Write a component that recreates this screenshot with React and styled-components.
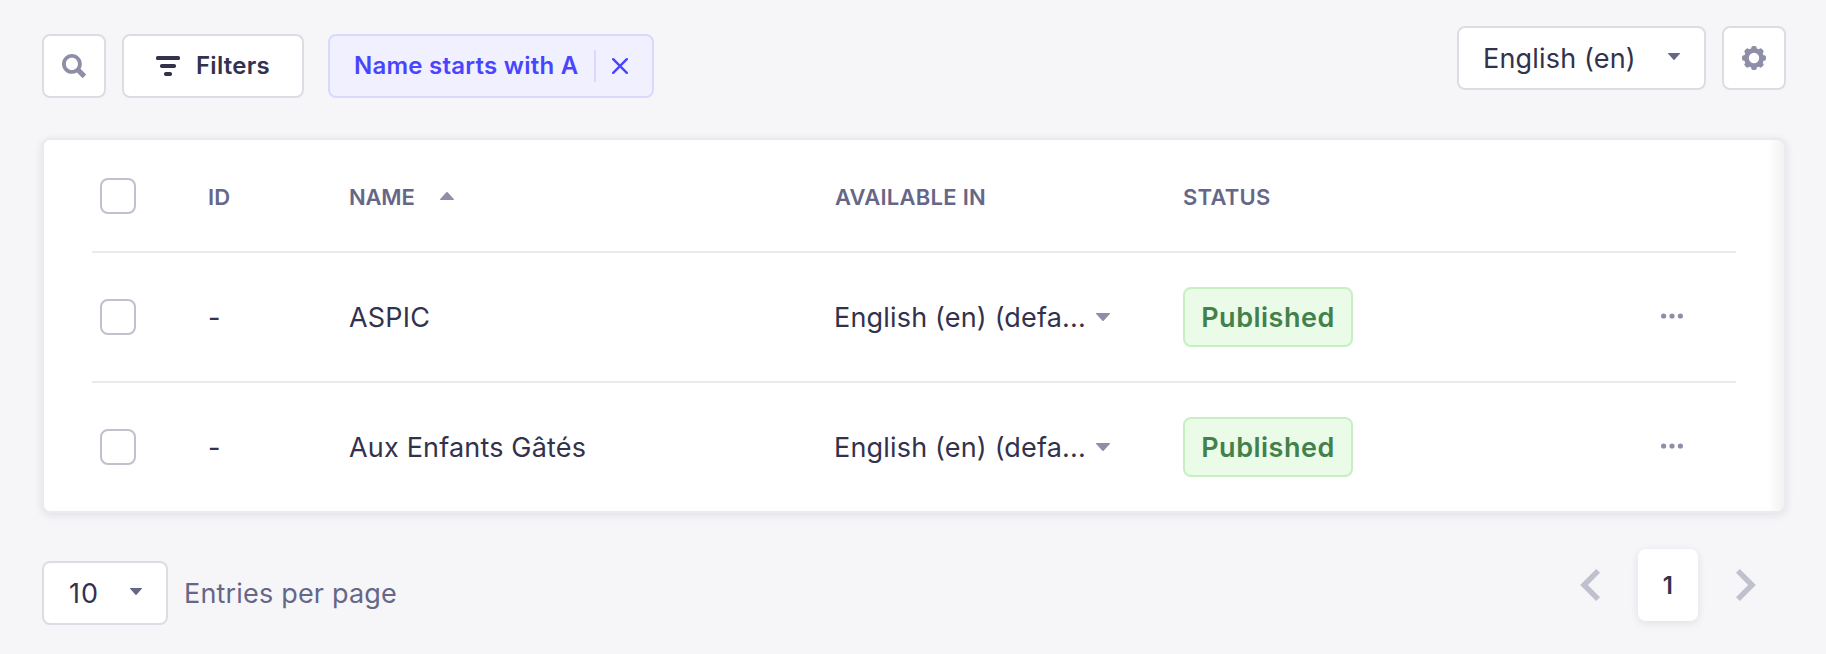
import React from "react";
import styled, { createGlobalStyle } from "styled-components";

const color = {
  page: "#f6f6f9",
  white: "#ffffff",
  line: "#eaeaef",
  border: "#dcdce4",
  disabled: "#c0c0cf",
  icon: "#8e8ea9",
  muted: "#666687",
  text: "#32324d",
  primary: "#4945ff",
  primarySoft: "#f0f0ff",
  primaryBorder: "#d9d8ff",
  success: "#43804b",
  successSoft: "#eafbe7",
  successBorder: "#c6f0c2",
};

const GlobalStyle = createGlobalStyle`
  * { box-sizing: border-box; }
  body {
    margin: 0;
    background: ${color.page};
    color: ${color.text};
    font-family: Inter, "Liberation Sans", sans-serif;
    font-size: 27px;
    letter-spacing: 0.18px;
    overflow: hidden;
  }
  button { font: inherit; letter-spacing: inherit; color: inherit; margin: 0; }
  svg { display: block; flex: none; }
`;

const Page = styled.main`
  width: 1826px;
  height: 654px;
  padding: 26px 40px 0 42px;
  background: ${color.page};
`;

const Toolbar = styled.header`
  display: flex;
  justify-content: space-between;
  align-items: flex-start;
  height: 72px;
`;

const FilterGroup = styled.div`
  display: flex;
  gap: 16px;
  padding-top: 8px;
`;

const LocaleGroup = styled.div`
  display: flex;
  gap: 16px;
`;

const Control = styled.button`
  display: flex;
  align-items: center;
  height: 64px;
  padding: 0 24px;
  border: 2px solid ${color.border};
  border-radius: 8px;
  background: ${color.white};
`;

const IconButton = styled(Control)`
  justify-content: center;
  width: 64px;
  padding: 0;
`;

const FilterButton = styled(Control)`
  gap: 16px;
  width: 182px;
  padding: 0 0 0 32px;
  font-size: 24px;
  font-weight: 600;
  letter-spacing: 0.26px;
`;

const ButtonLabel = styled.span`
  padding-bottom: 2px;
`;

const FilterTag = styled(Control)`
  width: 326px;
  margin-left: 8px;
  padding: 0 0 0 24px;
  border-color: ${color.primaryBorder};
  background: ${color.primarySoft};
  color: ${color.primary};
  font-size: 24px;
  font-weight: 600;
  letter-spacing: 0.24px;
`;

const TagLabel = styled(ButtonLabel)`
  width: 240px;
  text-align: left;
  white-space: nowrap;
`;

const TagDivider = styled.span`
  width: 2px;
  height: 32px;
  margin-right: 16px;
  background: ${color.primaryBorder};
`;

const Select = styled(Control)`
  justify-content: space-between;
  width: ${(p) => p.$width}px;
  letter-spacing: ${(p) => p.$tracking}px;
  svg { margin-top: -4px; }
`;

const TableCard = styled.section`
  margin-top: 40px;
  width: 1744px;
  height: 375px;
  padding: 0 48px;
  border: 2px solid ${color.line};
  border-radius: 8px;
  background: linear-gradient(270deg, rgba(33, 33, 52, 0.06), rgba(33, 33, 52, 0) 16px), ${color.white};
  box-shadow: 0 2px 8px rgba(33, 33, 52, 0.1);
`;

const Row = styled.div`
  display: grid;
  grid-template-columns: 116px 141px 485px 349px 170px 1fr;
  align-items: center;
  height: 130px;
  border-top: 2px solid ${color.line};
`;

const HeadRow = styled(Row)`
  height: 111px;
  border-top: 0;
  color: ${color.muted};
  font-size: 22px;
  font-weight: 600;
  letter-spacing: 0.26px;
`;

const HeadCell = styled.div`
  display: flex;
  align-items: center;
  gap: 25px;
  padding: 3px 0 0 ${(p) => p.$inset || 0}px;
  svg { margin-top: -3px; }
`;

const NameHeading = styled.span`
  letter-spacing: -0.2px;
`;

const Checkbox = styled.div`
  width: 36px;
  height: 36px;
  margin-left: 8px;
  border: 2px solid ${color.disabled};
  border-radius: 8px;
  background: ${color.white};
`;

const LocaleCell = styled.div`
  display: flex;
  align-items: center;
  white-space: nowrap;
`;

const LocaleLabel = styled.span`
  width: 262px;
`;

const Badge = styled.span`
  display: flex;
  align-items: center;
  justify-content: center;
  height: 60px;
  border: 2px solid ${color.successBorder};
  border-radius: 8px;
  background: ${color.successSoft};
  color: ${color.success};
  font-weight: 600;
  letter-spacing: 0.5px;
`;

const Actions = styled.div`
  display: flex;
  justify-content: flex-end;
  padding: 0 53px 2px 0;
`;

const Footer = styled.footer`
  display: flex;
  justify-content: space-between;
  align-items: flex-start;
  padding-top: 36px;
`;

const PageSize = styled.div`
  display: flex;
  align-items: center;
  gap: 16px;
  padding-top: 12px;
  color: ${color.muted};
`;

const SizeSelect = styled(Select)`
  padding-left: 25px;
  color: ${color.text};
`;

const Pagination = styled.nav`
  display: flex;
  align-items: center;
  gap: 38px;
  padding-right: 30px;
`;

const CurrentPage = styled.span`
  display: flex;
  align-items: center;
  justify-content: center;
  width: 60px;
  height: 72px;
  border-radius: 8px;
  background: ${color.white};
  box-shadow: 0 2px 8px rgba(33, 33, 52, 0.1);
  font-size: 24px;
  font-weight: 600;
`;

const SearchIcon = () => (
  <svg width="24" height="24" viewBox="0 0 24 24" fill={color.icon}>
    <path
      fillRule="evenodd"
      d="M23.813 20.163l-5.3-5.367a9.792 9.792 0 001.312-4.867C19.825 4.455 15.375 0 9.913 0 4.45 0 0 4.455 0 9.929c0 5.473 4.45 9.928 9.912 9.928a9.757 9.757 0 005.007-1.4l5.275 5.35a.634.634 0 00.913 0l2.706-2.741a.641.641 0 000-.903zM9.91 3.867c3.338 0 6.05 2.718 6.05 6.061s-2.712 6.061-6.05 6.061c-3.337 0-6.05-2.718-6.05-6.06 0-3.344 2.713-6.062 6.05-6.062z"
    />
  </svg>
);

const FilterIcon = () => (
  <svg width="24" height="20" viewBox="0 0 24 20" fill={color.text}>
    <rect width="24" height="4" rx="1.6" />
    <rect x="4" y="8" width="16" height="4" rx="1.8" />
    <rect x="8" y="16" width="8" height="4" rx="1.8" />
  </svg>
);

const CloseIcon = () => (
  <svg width="16" height="16" viewBox="0 0 16 16" fill="none" stroke={color.primary} strokeWidth="2.4" strokeLinecap="round">
    <path d="M1.2 1.2l13.6 13.6M14.8 1.2L1.2 14.8" />
  </svg>
);

const GearIcon = () => (
  <svg width="24" height="24" viewBox="-12 -12 24 24" fill={color.icon}>
    <circle r="7.6" fill="none" stroke={color.icon} strokeWidth="4.8" />
    {[0, 45, 90, 135, 180, 225, 270, 315].map((angle) => (
      <rect key={angle} x="-2.7" y="-12" width="5.4" height="5" rx="1.8" transform={`rotate(${angle})`} />
    ))}
  </svg>
);

const Caret = ({ width = 14, height = 8, fill = color.icon, up = false }) => (
  <svg width={width} height={height} viewBox="0 0 14 8" preserveAspectRatio="none" fill={fill}>
    <path
      transform={up ? "matrix(1 0 0 -1 0 8)" : undefined}
      d="M.5 0h13c.5 0 .7.6.3.9L7.6 7.7a.8.8 0 01-1.2 0L.2.9C-.2.6 0 0 .5 0z"
    />
  </svg>
);

const DotsIcon = () => (
  <svg width="22" height="6" viewBox="0 0 22 6" fill={color.icon}>
    <circle cx="2.6" cy="3" r="2.6" />
    <circle cx="11" cy="3" r="2.6" />
    <circle cx="19.4" cy="3" r="2.6" />
  </svg>
);

const Chevron = ({ right = false }) => (
  <svg width="20" height="32" viewBox="0 0 20 32" fill="none" stroke={color.disabled} strokeWidth="5.4">
    <path d={right ? "M1.9 1.9L16 16 1.9 30.1" : "M18.1 1.9L4 16l14.1 14.1"} />
  </svg>
);

const entries = ["ASPIC", "Aux Enfants Gâtés"];

export default function App() {
  return (
    <>
      <GlobalStyle />
      <Page>
        <Toolbar>
          <FilterGroup>
            <IconButton aria-label="Search"><SearchIcon /></IconButton>
            <FilterButton><FilterIcon /><ButtonLabel>Filters</ButtonLabel></FilterButton>
            <FilterTag>
              <TagLabel>Name starts with A</TagLabel>
              <TagDivider />
              <CloseIcon />
            </FilterTag>
          </FilterGroup>
          <LocaleGroup>
            <Select $width={249} $tracking={0.18}>
              English (en)
              <Caret width={12} height={7} fill={color.muted} />
            </Select>
            <IconButton aria-label="Settings"><GearIcon /></IconButton>
          </LocaleGroup>
        </Toolbar>

        <TableCard>
          <HeadRow>
            <Checkbox />
            <HeadCell>ID</HeadCell>
            <HeadCell><NameHeading>NAME</NameHeading><Caret up /></HeadCell>
            <HeadCell $inset={1}>AVAILABLE IN</HeadCell>
            <HeadCell>STATUS</HeadCell>
          </HeadRow>
          {entries.map((name) => (
            <Row key={name}>
              <Checkbox />
              <span>-</span>
              <span>{name}</span>
              <LocaleCell>
                <LocaleLabel>English (en) (defa...</LocaleLabel>
                <Caret />
              </LocaleCell>
              <Badge>Published</Badge>
              <Actions><DotsIcon /></Actions>
            </Row>
          ))}
        </TableCard>

        <Footer>
          <PageSize>
            <SizeSelect $width={126} $tracking={1}>
              10
              <Caret width={12} height={7} fill={color.muted} />
            </SizeSelect>
            Entries per page
          </PageSize>
          <Pagination>
            <Chevron />
            <CurrentPage>1</CurrentPage>
            <Chevron right />
          </Pagination>
        </Footer>
      </Page>
    </>
  );
}
